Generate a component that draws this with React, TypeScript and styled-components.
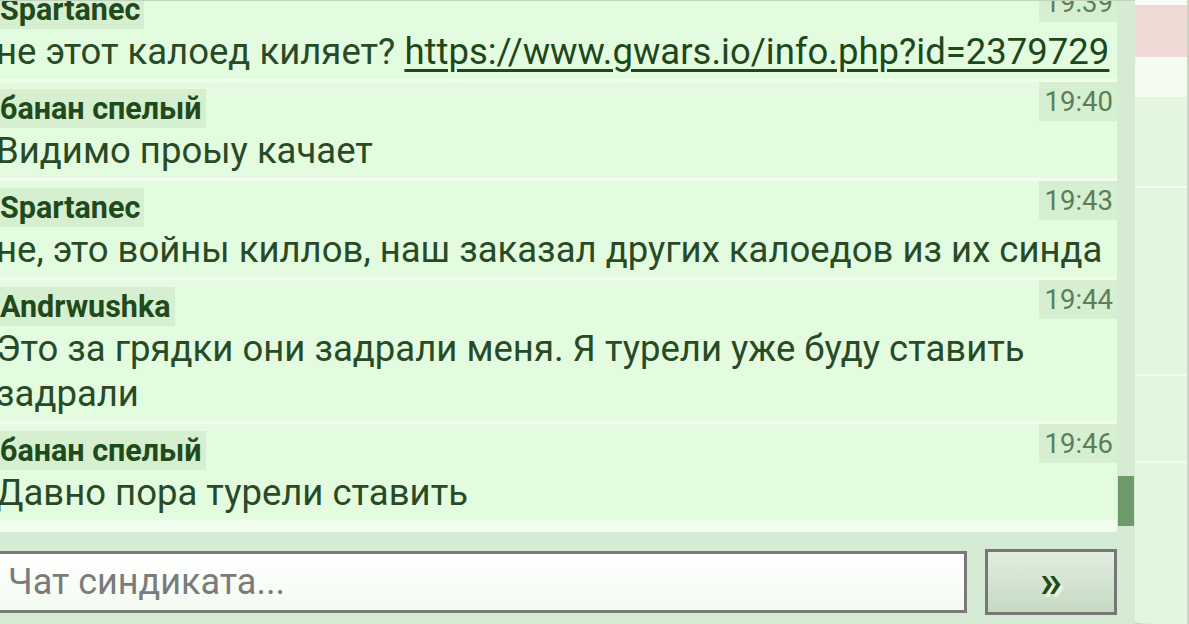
import styled, { createGlobalStyle } from "styled-components";

const GlobalStyle = createGlobalStyle`
  html, body {
    margin: 0;
    padding: 0;
    overflow: hidden;
    background: #e3f6de;
  }
  body {
    font-family: Roboto, "Noto Sans", sans-serif;
  }
`;

const Page = styled.div`
  display: flex;
  width: 1189px;
  height: 624px;
  overflow: hidden;
`;

const ChatPanel = styled.div`
  display: flex;
  flex-direction: column;
  width: 1145px;
  margin-left: -10px;
  height: 624px;
  background: #d6ebd3;
  border-top: 1px solid #bfd3bd;
  box-sizing: border-box;
`;

const ListArea = styled.div`
  display: flex;
  height: 531px;
`;

const MessageList = styled.div`
  flex: 1;
  display: flex;
  flex-direction: column;
  justify-content: flex-end;
  overflow: hidden;
  background: #f1fdef;
  padding-bottom: 9px;
`;

const Message = styled.div`
  flex-shrink: 0;
  background: #e3fbdf;
  padding: 0 0 5px 6px;
  border-bottom: 3px solid #f1fdef;
`;

const Header = styled.div`
  display: flex;
  justify-content: space-between;
  align-items: flex-start;
`;

const Author = styled.span`
  margin-top: 7px;
  padding: 2px 4px;
  background: #d5efd0;
  color: #1f4a1b;
  font-weight: 700;
  font-size: 30.5px;
  line-height: 35px;
`;

const Time = styled.span`
  padding: 2px 4px 2px 6px;
  background: #d5efd0;
  color: #5d7d5b;
  font-size: 27.5px;
  line-height: 35px;
`;

const Body = styled.div`
  color: #284a26;
  font-size: 36.5px;
  line-height: 45px;
  padding-right: 4px;

  a {
    color: #1e471b;
    text-decoration: underline;
    text-decoration-thickness: 3px;
    text-underline-offset: 5px;
  }
`;

const Scrollbar = styled.div`
  width: 18px;
  display: flex;
  flex-direction: column;
  justify-content: flex-end;
  background: #d6ebd3;
  padding-bottom: 6px;
  box-sizing: border-box;
`;

const Thumb = styled.div`
  height: 50px;
  margin-left: 1px;
  margin-right: 1px;
  background: #6d9a6a;
`;

const InputRow = styled.div`
  flex: 1;
  display: flex;
  align-items: center;
  gap: 18px;
  padding: 8px 18px 0 0;
`;

const ChatInput = styled.input`
  flex: 1;
  height: 62px;
  box-sizing: border-box;
  border: 3px solid #7a7a7a;
  background: linear-gradient(#ffffff, #f3fbf1);
  padding: 0 0 0 15px;
  font-family: Roboto, "Noto Sans", sans-serif;
  font-size: 36px;
  color: #333;
  outline: none;

  &::placeholder {
    color: #7b7b7b;
  }
`;

const SendButton = styled.button`
  width: 132px;
  height: 66px;
  box-sizing: border-box;
  border: 3px solid #777;
  background: linear-gradient(#e3ede1, #c5dac3);
  color: #1f4a1b;
  font-family: Roboto, sans-serif;
  font-size: 46px;
  font-weight: 500;
  line-height: 1;
  text-shadow: 3px 3px 0 #eaf4d2;
  padding: 0 0 2px 0;
  cursor: pointer;
`;

const SidePanel = styled.div`
  flex: 1;
  display: flex;
  flex-direction: column;
  border-right: 2px solid #c7d6c5;
  box-shadow: inset 14px 0 12px -8px rgba(60, 110, 55, 0.28);
`;

const SideRow = styled.div<{ h: number; bg: string; line?: boolean }>`
  height: ${({ h }) => h}px;
  flex-shrink: 0;
  background: ${({ bg }) => bg};
  border-bottom: ${({ line }) => (line ? "2px solid #f2fcf0" : "none")};
`;

type Msg = { author: string; time: string; text: React.ReactNode };

const messages: Msg[] = [
  {
    author: "Spartanec",
    time: "19:39",
    text: (
      <>
        не этот калоед киляет?{" "}
        <a href="#">https://www.gwars.io/info.php?id=2379729</a>
      </>
    ),
  },
  { author: "банан спелый", time: "19:40", text: "Видимо проыу качает" },
  {
    author: "Spartanec",
    time: "19:43",
    text: "не, это войны киллов, наш заказал других калоедов из их синда",
  },
  {
    author: "Andrwushka",
    time: "19:44",
    text: "Это за грядки они задрали меня. Я турели уже буду ставить задрали",
  },
  { author: "банан спелый", time: "19:46", text: "Давно пора турели ставить" },
];

const App = () => {
  return (
    <Page>
      <GlobalStyle />
      <ChatPanel>
        <ListArea>
          <MessageList>
            {messages.map((m, i) => (
              <Message key={i}>
                <Header>
                  <Author>{m.author}</Author>
                  <Time>{m.time}</Time>
                </Header>
                <Body>{m.text}</Body>
              </Message>
            ))}
          </MessageList>
          <Scrollbar>
            <Thumb />
          </Scrollbar>
        </ListArea>
        <InputRow>
          <ChatInput placeholder="Чат синдиката..." />
          <SendButton>»</SendButton>
        </InputRow>
      </ChatPanel>
      <SidePanel>
        <SideRow h={5} bg="#f8fdf6" />
        <SideRow h={52} bg="#efdad6" />
        <SideRow h={40} bg="#f4fcf2" />
        <SideRow h={89} bg="#e3f6de" line />
        <SideRow h={186} bg="#e3f6de" line />
        <SideRow h={85} bg="#e3f6de" line />
        <SideRow h={160} bg="#e3f6de" />
      </SidePanel>
    </Page>
  );
};

export default App;
